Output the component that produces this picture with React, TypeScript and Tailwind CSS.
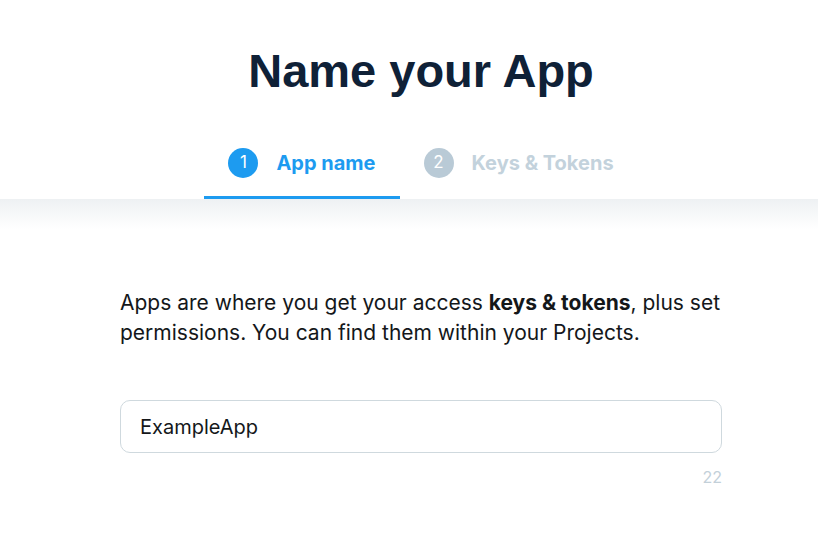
export default function App() {
  return (
    <div className="min-h-screen bg-white font-['Inter',sans-serif]">
      {/* Header */}
      <div className="pl-[24px] pt-[43px]">
        <h1 className="text-center font-['Liberation_Sans',Arial,sans-serif] text-[47px] font-bold leading-[56px] text-[#0f2137]">
          Name your App
        </h1>
        <div className="mt-[30px] flex justify-center">
          <div className="flex h-[70px] items-center gap-[18px] border-b-[3px] border-[#1d9bf0] px-6">
            <span className="flex h-[30px] w-[30px] items-center justify-center rounded-full bg-[#1d9bf0] text-[17px] text-white">
              1
            </span>
            <span className="text-[20px] font-bold text-[#1d9bf0]">App name</span>
          </div>
          <div className="flex h-[70px] items-center gap-[18px] border-b-[3px] border-transparent px-6">
            <span className="flex h-[30px] w-[30px] items-center justify-center rounded-full bg-[#b9cad6] text-[17px] text-white">
              2
            </span>
            <span className="text-[20px] font-bold text-[#c3d2dc]">Keys &amp; Tokens</span>
          </div>
        </div>
      </div>
      <div className="h-[30px] bg-gradient-to-b from-[#eef1f3] to-white" />

      {/* Body */}
      <div className="flex justify-center pl-[24px] pt-[59px]">
        <div className="w-[602px]">
          <p className="text-[21px] leading-[30px] text-[#14171a]">
            Apps are where you get your access <b>keys &amp; tokens</b>, plus set permissions. You can find them within your Projects.
          </p>
          <div className="mt-[52px] flex h-[53px] items-center rounded-[10px] border border-[#cfd9de] px-[19px] text-[20px] text-[#14171a]">
            ExampleApp
          </div>
          <div className="mt-[12px] text-right text-[16px] text-[#c3d0d9]">22</div>
        </div>
      </div>
    </div>
  );
}
